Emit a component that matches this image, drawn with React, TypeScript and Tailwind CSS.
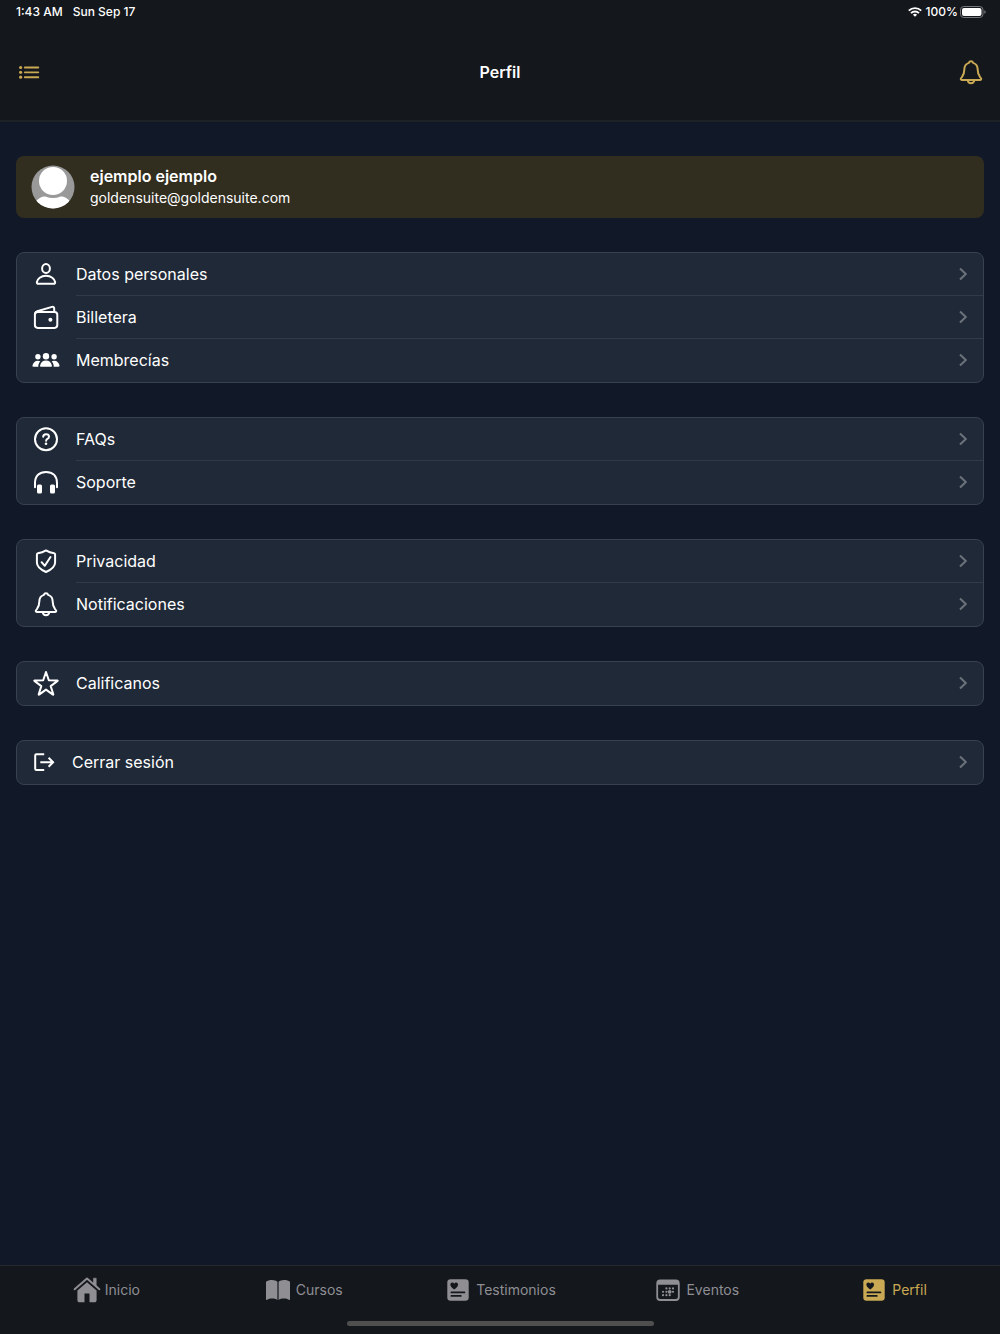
import type { ReactNode } from 'react';

type IconProps = { children: ReactNode; className?: string };

function Icon({ children, className = 'size-7' }: IconProps) {
  return (
    <svg
      viewBox="0 0 28 28"
      className={`shrink-0 ${className}`}
      fill="none"
      stroke="currentColor"
      strokeWidth="2"
      strokeLinecap="round"
      strokeLinejoin="round"
      aria-hidden="true"
    >
      {children}
    </svg>
  );
}

const PersonIcon = () => (
  <Icon>
    <ellipse cx="14" cy="8.5" rx="3.900" ry="4.500" />
    <path d="M6.500 23.800h15c1.300 0 1.800-.7 1.600-1.800-.5-3.100-4-6.200-9.100-6.200s-8.600 3.100-9.100 6.200c-.2 1.100.3 1.800 1.600 1.800Z" />
  </Icon>
);

const WalletIcon = () => (
  <Icon>
    <rect x="2.900" y="8.900" width="22.400" height="16" rx="2.800" />
    <path d="M3 10.500c.2-1.200.9-1.800 2.200-2.200L20 3.900c1.300-.4 2.200.2 2.200 1.500v3.300" />
    <circle cx="18.400" cy="16.700" r="2" fill="currentColor" stroke="none" />
  </Icon>
);

const GroupIcon = () => (
  <Icon>
    <g fill="currentColor" stroke="none">
      <circle cx="14" cy="10.200" r="3.200" />
      <circle cx="5.900" cy="10.800" r="2.700" />
      <circle cx="22.100" cy="10.800" r="2.700" />
      <path d="M9.200 20.800c-.9 0-1.300-.5-1.100-1.300.5-2.900 2.900-4.900 5.900-4.900s5.400 2 5.900 4.900c.2.800-.2 1.300-1.100 1.300Z" />
      <path d="M1.600 20.800c-.8 0-1.200-.4-1.100-1.200.4-2.800 2.500-4.900 5.300-4.900 1 0 1.900.2 2.600.7-1.200 1-1.900 2.500-2.100 4.200-.1.500 0 .9.200 1.200Z" />
      <path d="M26.400 20.800c.8 0 1.200-.4 1.100-1.200-.4-2.800-2.500-4.900-5.300-4.900-1 0-1.900.2-2.600.7 1.200 1 1.900 2.500 2.100 4.200.1.500 0 .9-.2 1.200Z" />
    </g>
  </Icon>
);

const QuestionIcon = () => (
  <Icon>
    <circle cx="14" cy="14.200" r="11" />
    <path d="M11.200 11.800c0-1.600 1.200-2.500 2.900-2.500s2.900 1 2.900 2.400c0 1.100-.7 1.700-1.600 2.200-.9.600-1.300 1-1.300 1.800" />
    <circle cx="14" cy="18.700" r="1.300" fill="currentColor" stroke="none" />
  </Icon>
);

const HeadphonesIcon = () => (
  <Icon>
    <path d="M3 19.200v-4.100C3 7.900 7.400 3.900 14 3.900s11 4 11 11.200v4.100" />
    <rect x="5" y="16.600" width="5" height="8.900" rx="1.500" fill="currentColor" stroke="none" />
    <rect x="18" y="16.600" width="5" height="8.900" rx="1.500" fill="currentColor" stroke="none" />
  </Icon>
);

const ShieldIcon = () => (
  <Icon>
    <path d="M14 3.400c-2.700 1.700-5.500 2.500-8.100 2.800-.7.100-1 .5-1 1.200v8.100c0 4.200 3.200 6.900 9.100 9.500 5.900-2.600 9.100-5.300 9.100-9.500V7.400c0-.7-.3-1.100-1-1.200-2.600-.3-5.400-1.100-8.100-2.800Z" />
    <path d="m9.600 15.200 3.200 3.600 5.700-8.800" />
  </Icon>
);

function BellIcon({ className }: { className?: string }) {
  return (
    <Icon className={className}>
      <path d="M14 3.200c-1.200 0-1.900.8-2.100 1.700C8.800 5.900 7.300 8.600 7.300 11.800c0 4-1 5.600-2.400 7.300-.8.900-1.200 1.400-1.200 2 0 .5.400.8 1 .8h18.600c.6 0 1-.3 1-.8 0-.6-.4-1.100-1.200-2-1.400-1.700-2.400-3.300-2.400-7.300 0-3.200-1.500-5.900-4.600-6.900-.2-.9-.9-1.700-2.100-1.700Z" />
      <path d="M10.700 22.400c.3 1.700 1.500 2.800 3.300 2.800s3-1.100 3.300-2.800" />
    </Icon>
  );
}

const StarIcon = () => (
  <Icon>
    <path d="m14 3 2.800 8.300 8.600.1c.3 0 .4.300.2.500l-6.900 5.200 2.600 8.200c.1.300-.2.500-.4.300L14 20.600l-6.900 5c-.2.200-.5 0-.4-.3l2.600-8.200-6.900-5.200c-.2-.2-.1-.5.2-.5l8.600-.1Z" />
  </Icon>
);

const LogoutIcon = () => (
  <svg viewBox="0 0 24 24" className="size-6 shrink-0" fill="none" stroke="currentColor" strokeWidth="2" aria-hidden="true">
    <path d="M12.200 4.200H4.400Q3.200 4.200 3.200 5.400v13.400q0 1.200 1.200 1.200h7.800" />
    <path d="M8.300 12.200h12.500M16.600 7.700l4.500 4.500-4.500 4.500" />
  </svg>
);

const HomeIcon = () => (
  <Icon>
    <path d="M1.600 13.200 14 2.600l12.400 10.600" />
    <path d="M20.500 7.500V2.200h2.700v7.700Z" fill="currentColor" strokeWidth=".6" />
    <path
      d="M14 6.200 4.400 14.500v9.400c0 1.500.8 2.300 2.300 2.300h4.800v-8.700h5v8.700h4.800c1.500 0 2.300-.8 2.300-2.300v-9.400Z"
      fill="currentColor"
      stroke="none"
    />
  </Icon>
);

const BookIcon = () => (
  <Icon>
    <g fill="currentColor" stroke="none">
      <path d="M2 5.800C3.400 4.500 5.500 3.900 8 3.900c2.200 0 4.200.7 5.400 1.900v18.100c-1.400-.9-3.300-1.400-5.400-1.400-2 0-3.600.4-4.800 1.200-.7.400-1.200.2-1.200-.5Z" />
      <path d="M26 5.800c-1.400-1.300-3.500-1.900-6-1.900-2.200 0-4.200.7-5.400 1.900v18.100c1.400-.9 3.300-1.400 5.400-1.400 2 0 3.600.4 4.800 1.200.7.400 1.200.2 1.200-.5Z" />
    </g>
  </Icon>
);

const CardHeartIcon = () => (
  <Icon>
    <rect x="3.300" y="3.300" width="21.400" height="21.400" rx="3.300" fill="currentColor" stroke="none" />
    <path
      d="M10.200 13.500C7.700 11.700 6.400 10.400 6.400 8.700c0-1.300.8-2.200 1.900-2.200.8 0 1.500.4 1.900 1.200.4-.8 1.100-1.200 1.900-1.200 1.100 0 1.900.9 1.900 2.200 0 1.700-1.300 3-3.800 4.800Z"
      fill="#14171c"
      stroke="none"
    />
    <path d="M7.400 16.400h13M7.400 19.900h9.400" stroke="#14171c" strokeWidth="1.800" />
  </Icon>
);

const calendarDots = [
  [12.4, 12.4], [15.7, 12.4], [19, 12.4],
  [9, 15.8], [12.4, 15.8], [19, 15.8],
  [9, 19.2], [12.4, 19.2], [15.7, 19.2],
];

const CalendarIcon = () => (
  <Icon>
    <rect x="3.200" y="4.400" width="21.600" height="19.600" rx="3" strokeWidth="1.800" />
    <path d="M3 8.800V7c0-2 1-3 3-3h16c2 0 3 1 3 3v1.800Z" fill="currentColor" stroke="none" />
    {calendarDots.map(([x, y]) => (
      <circle key={`${x}-${y}`} cx={x} cy={y} r="1.100" fill="currentColor" stroke="none" />
    ))}
    <circle cx="15.700" cy="15.800" r="1.900" fill="currentColor" stroke="none" />
  </Icon>
);

type Item = { label: string; icon: () => ReactNode };

const groups: Item[][] = [
  [
    { label: 'Datos personales', icon: PersonIcon },
    { label: 'Billetera', icon: WalletIcon },
    { label: 'Membrecías', icon: GroupIcon },
  ],
  [
    { label: 'FAQs', icon: QuestionIcon },
    { label: 'Soporte', icon: HeadphonesIcon },
  ],
  [
    { label: 'Privacidad', icon: ShieldIcon },
    { label: 'Notificaciones', icon: BellIcon },
  ],
  [{ label: 'Calificanos', icon: StarIcon }],
  [{ label: 'Cerrar sesión', icon: LogoutIcon }],
];

const tabs: Item[] = [
  { label: 'Inicio', icon: HomeIcon },
  { label: 'Cursos', icon: BookIcon },
  { label: 'Testimonios', icon: CardHeartIcon },
  { label: 'Eventos', icon: CalendarIcon },
  { label: 'Perfil', icon: CardHeartIcon },
];

function StatusBar() {
  return (
    <div className="flex h-6 items-center justify-between pr-3.5 pl-4 text-xs font-medium text-white">
      <div className="flex gap-2.5">
        <span>1:43 AM</span>
        <span>Sun Sep 17</span>
      </div>
      <div className="flex items-center gap-1">
        <svg viewBox="0 0 14 10" className="h-2.5 w-3.5" fill="none" stroke="currentColor" strokeWidth="1.900" aria-hidden="true">
          <path d="M.8 3.700a8.800 8.800 0 0 1 12.400 0M3 6.100a5.700 5.700 0 0 1 8 0" />
          <path d="M7 9.800 4.900 7.700a3 3 0 0 1 4.200 0Z" fill="currentColor" stroke="none" />
        </svg>
        <span>100%</span>
        <svg viewBox="0 0 26 12" className="-ml-0.5 h-3 w-[26px]" aria-hidden="true">
          <rect x=".5" y=".5" width="22.500" height="11" rx="3.300" fill="none" stroke="#76787b" />
          <rect x="2" y="2" width="19.500" height="8" rx="2" fill="#fff" />
          <path d="M24.300 4.200c1 .4 1.400 1 1.400 1.800s-.4 1.400-1.400 1.800Z" fill="#76787b" />
        </svg>
      </div>
    </div>
  );
}

function ListGroup({ items }: { items: Item[] }) {
  return (
    <ul className="overflow-hidden rounded-lg border border-[#374151] bg-[#1f2937]">
      {items.map(({ label, icon: ItemIcon }, index) => (
        <li key={label}>
          <a href="#" className="flex items-stretch gap-4 pl-[15px]">
            <span className="flex items-center pb-px">
              <ItemIcon />
            </span>
            <span
              className={`flex h-[43px] grow items-center justify-between border-b pr-3.5 ${
                index < items.length - 1 ? 'border-[#303a49]' : 'border-transparent'
              }`}
            >
              {label}
              <svg viewBox="0 0 12 14" className="h-3.5 w-3" fill="none" stroke="#6b727c" strokeWidth="2" aria-hidden="true">
                <path d="m3 1.500 5.800 5.500L3 12.500" />
              </svg>
            </span>
          </a>
        </li>
      ))}
    </ul>
  );
}

export default function App() {
  return (
    <div className="flex min-h-screen flex-col bg-[#111827] font-['Inter',sans-serif] text-base text-white">
      <header className="border-b-2 border-[#1d2227] bg-[#14171c]">
        <StatusBar />
        <div className="flex h-24 items-center justify-between px-[15px]">
          <button type="button" aria-label="Menú" className="flex size-7 items-center justify-center text-[#c9a953]">
            <Icon className="size-[26px]">
              <path d="M9.500 9.200h14.500M9.500 14.400h14.500M9.500 19.600h14.500" />
              <g fill="currentColor" stroke="none">
                <circle cx="5" cy="9.200" r="1.700" />
                <circle cx="5" cy="14.400" r="1.700" />
                <circle cx="5" cy="19.600" r="1.700" />
              </g>
            </Icon>
          </button>
          <h1 className="font-semibold">Perfil</h1>
          <button type="button" aria-label="Notificaciones" className="text-[#c9a953]">
            <BellIcon className="size-7" />
          </button>
        </div>
      </header>

      <main className="flex grow flex-col gap-[34px] px-4 pt-[34px] pb-8">
        <section className="flex h-[62px] items-center gap-[15px] rounded-lg bg-[#312e20] pl-[15px]">
          <svg viewBox="0 0 44 44" className="size-11 shrink-0" aria-hidden="true">
            <clipPath id="avatar">
              <circle cx="22" cy="22" r="21.500" />
            </clipPath>
            <g clipPath="url(#avatar)">
              <rect width="44" height="44" fill="#999" />
              <circle cx="22" cy="16" r="14" fill="#fff" />
              <path d="M5 36c3-3.200 6.500-5 9.300-4.500 5 2 10.400 2 15.400 0C32.500 31 36 32.800 39 36v8H5Z" fill="#fff" />
            </g>
          </svg>
          <div className="pb-0.5">
            <h2 className="leading-6 font-semibold">ejemplo ejemplo</h2>
            <p className="text-sm">goldensuite@goldensuite.com</p>
          </div>
        </section>

        {groups.map((items) => (
          <ListGroup key={items[0].label} items={items} />
        ))}
      </main>

      <footer className="border-t border-[#25282d] bg-[#14171c] pb-2">
        <nav aria-label="Principal" className="grid h-12 grid-cols-5 px-2 text-sm">
          {tabs.map(({ label, icon: TabIcon }) => (
            <a
              key={label}
              href="#"
              aria-current={label === 'Perfil' ? 'page' : undefined}
              className={`flex items-center justify-center gap-1 ${
                label === 'Perfil' ? 'text-[#c9a953]' : 'text-[#8e8e93]'
              }`}
            >
              <TabIcon />
              {label}
            </a>
          ))}
        </nav>
        <div className="mx-auto mt-[7px] h-[5px] w-[307px] rounded-full bg-[#4f4f50]" />
      </footer>
    </div>
  );
}
